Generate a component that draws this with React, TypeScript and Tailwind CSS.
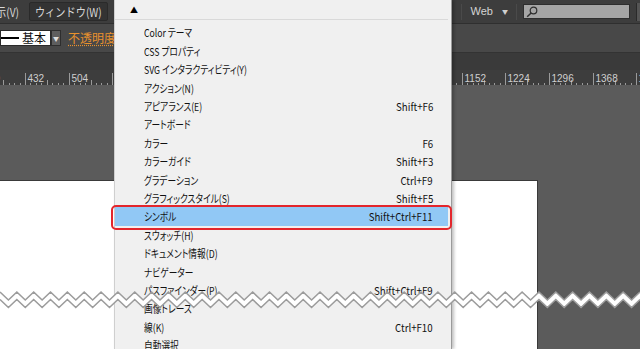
import React from 'react';

const items: [string, string][] = [
  ['Color テーマ', ''],
  ['CSS プロパティ', ''],
  ['SVG インタラクティビティ(Y)', ''],
  ['アクション(N)', ''],
  ['アピアランス(E)', 'Shift+F6'],
  ['アートボード', ''],
  ['カラー', 'F6'],
  ['カラーガイド', 'Shift+F3'],
  ['グラデーション', 'Ctrl+F9'],
  ['グラフィックスタイル(S)', 'Shift+F5'],
  ['シンボル', 'Shift+Ctrl+F11'],
  ['スウォッチ(H)', ''],
  ['ドキュメント情報(D)', ''],
  ['ナビゲーター', ''],
  ['パスファインダー(P)', 'Shift+Ctrl+F9'],
  ['画像トレース', ''],
  ['線(K)', 'Ctrl+F10'],
  ['自動選択', ''],
];

const Ruler = () => {
  const step = 43.67;
  const ticks: React.ReactNode[] = [];
  const labels: React.ReactNode[] = [];
  for (let k = -1; k <= 14; k++) {
    const x0 = 25 + k * step;
    for (let j = 0; j < 8; j++) {
      const x = Math.round(x0 + (j * step) / 8) + 0.5;
      const h = j === 0 ? 12 : j === 4 ? 5 : 2;
      ticks.push(<line key={`${k}-${j}`} x1={x} x2={x} y1={15 - h} y2={15} stroke="#9a9a9a" strokeWidth={1} />);
    }
    labels.push(
      <text key={k} x={Math.round(x0) + 2.5} y={12} fontSize={10} fill="#cfcfcf" fontFamily="'Liberation Sans', Arial, sans-serif">
        {432 + 72 * k}
      </text>
    );
  }
  return (
    <svg width="640" height="15" className="block">
      {ticks}
      {labels}
    </svg>
  );
};

const Zigzag = () => {
  const P = 640 / 38;
  const top: string[] = [];
  const bot: string[] = [];
  for (let i = 0; i <= 76; i++) {
    const x = (i * P) / 2;
    const up = i % 2 === 0;
    top.push(`${x.toFixed(2)},${up ? 4 : 12}`);
    bot.push(`${x.toFixed(2)},${up ? 11.5 : 19.5}`);
  }
  const fill = [...top, ...[...bot].reverse()].join(' ');
  return (
    <svg width="640" height="24" className="absolute left-0 top-[288px] pointer-events-none">
      <polygon points={fill} fill="#ffffff" />
      <polyline points={top.join(' ')} fill="none" stroke="#9c9c9c" strokeWidth={1.6} />
      <polyline points={bot.join(' ')} fill="none" stroke="#9c9c9c" strokeWidth={1.6} />
    </svg>
  );
};

const App = () => {
  return (
    <div className="relative w-[640px] h-[349px] overflow-hidden bg-[#5b5b5b] font-['Noto_Sans_CJK_JP','Noto_Sans',sans-serif]">
      {/* menu bar */}
      <div className="h-[24px] bg-[#3d3d3d] border-b border-[#2f2f2f] flex items-center text-[12px] text-[#d8d8d8] whitespace-nowrap">
        <span className="shrink-0 w-[26px] -ml-[4px] inline-block origin-left scale-x-[0.85]">示(V)</span>
        <div className="shrink-0 ml-[7px] h-[19px] w-[79px] rounded-[2px] bg-[#333333] border border-[#2a2a2a] flex items-center justify-center">
          <span className="inline-block scale-x-[0.85]">ウィンドウ(W)</span>
        </div>
        <div className="flex-1" />
        <div className="h-[16px] w-px bg-[#2c2c2c] border-r border-[#4a4a4a]" />
        <span className="ml-[9px] text-[11px] font-['Liberation_Sans',sans-serif] text-[#d4d4d4]">Web</span>
        <span className="ml-[9px] text-[6px] text-[#cfcfcf]">▼</span>
        <div className="ml-[8px] h-[16px] w-px bg-[#2c2c2c] border-r border-[#4a4a4a]" />
        <div className="ml-[6px] h-[15px] w-[107px] bg-[#a5a5a5] border border-[#2e2e2e] flex items-center pl-[2px]">
          <svg width="12" height="12" viewBox="0 0 12 12">
            <circle cx="7.5" cy="4.5" r="3.3" fill="none" stroke="#2e2e2e" strokeWidth="1.2" />
            <line x1="5.1" y1="6.9" x2="1.2" y2="10.8" stroke="#2e2e2e" strokeWidth="1.4" />
          </svg>
        </div>
        <div className="ml-[6px] h-[18px] w-[4px] bg-[#555] border-l border-[#2a2a2a]" />
      </div>

      {/* control bar */}
      <div className="h-[28px] bg-[#484848] flex items-center text-[12px] whitespace-nowrap">
        <div className="h-[16px] w-[51px] bg-white border border-[#2a2a2a] flex items-center">
          <div className="w-[18px] h-[2px] bg-black" />
          <span className="ml-[3px] text-[#111]">基本</span>
        </div>
        <div className="h-[16px] w-[10px] bg-[#5e5e5e] border border-[#2e2e2e] flex items-center justify-center text-[6px] text-[#ddd]">▼</div>
        <span className="ml-[7px] text-[#e8912d] underline decoration-dotted underline-offset-2">不透明度：</span>
      </div>

      {/* tab strip */}
      <div className="h-[18px] bg-[#3a3a3a] border-t border-[#333]" />

      {/* ruler */}
      <div className="h-[15px] bg-[#3d3d3d]">
        <Ruler />
      </div>

      {/* canvas */}
      <div className="pt-[95px]">
        <div className="w-[538px] h-[200px] bg-white border-r border-t border-[#3a3a3a]" />
      </div>

      {/* dropdown menu */}
      <div className="absolute left-[114px] top-0 w-[338px] h-[349px] bg-[#f0f0f0] border-l border-[#cfcfcf] border-r border-r-[#9a9a9a] shadow-[2px_0_3px_rgba(0,0,0,0.25)] text-[11px] text-[#111] [font-feature-settings:'palt']">
        <div className="h-[19px] flex items-center pl-[15px] text-[8px] text-black">▲</div>
        <div className="h-px bg-[#d9d9d9] mr-[3px]" />
        <div className="pt-[3.5px]">
          {items.map(([label, sc], i) => {
            const active = i === 10;
            return (
              <div
                key={label}
                className={`relative h-[18.4px] flex items-center pl-[29px] pr-[15px] mr-[3px] ${active ? 'bg-[#91c8f5]' : ''}`}
              >
                <span className="flex-1 whitespace-nowrap">
                  <span className="inline-block origin-left scale-x-[0.79]">{label}</span>
                </span>
                <span className="whitespace-nowrap inline-block origin-right scale-x-[0.88]">{sc}</span>
                {active && (
                  <span className="absolute -left-[4px] -right-[4px] -top-[2px] -bottom-[4px] border-2 border-[#e3262c] rounded-[5px]" />
                )}
              </div>
            );
          })}
        </div>
      </div>

      <Zigzag />
    </div>
  );
};

export default App;
